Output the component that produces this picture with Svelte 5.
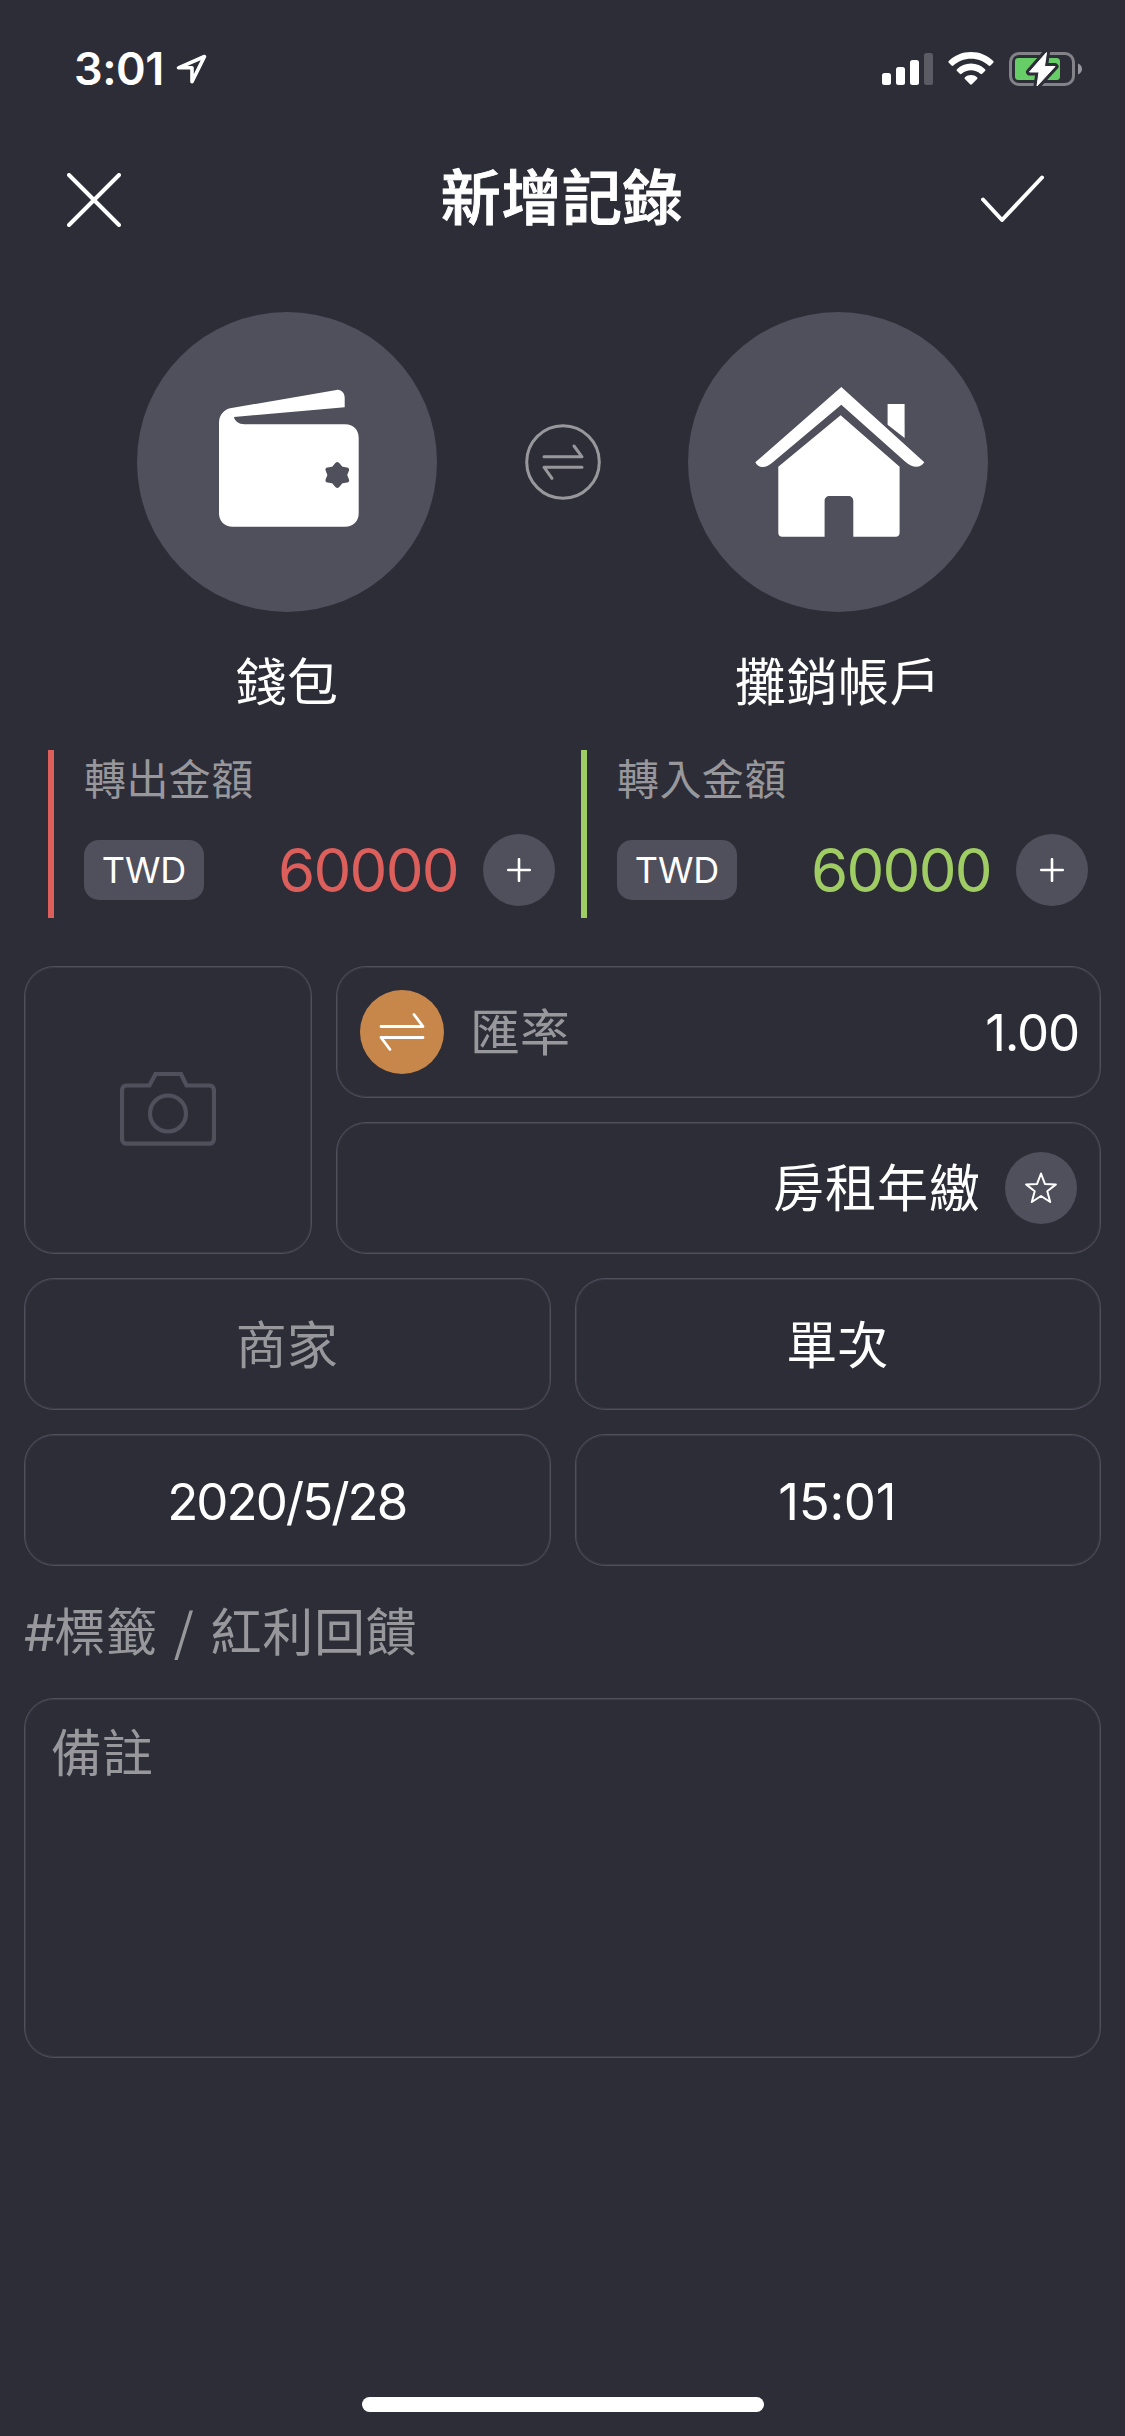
<script lang="ts">
	/**
	 * AddRecord
	 * Transfer form: accounts, amounts, exchange rate and record details
	 */
	type Side = {
		kind: 'out' | 'in';
		label: string;
		currency: string;
		amount: string;
	};

	const sides: Side[] = [
		{ kind: 'out', label: '轉出金額', currency: 'TWD', amount: '60000' },
		{ kind: 'in', label: '轉入金額', currency: 'TWD', amount: '60000' }
	];

	const details = [
		{ text: '商家', type: 'muted' },
		{ text: '單次', type: 'repeat' },
		{ text: '2020/5/28', type: 'date' },
		{ text: '15:01', type: 'hour' }
	];
</script>

<div class="screen">
	<div class="status-bar">
		<div class="clock">
			<span class="time">3:01</span>
			<svg class="location" viewBox="0 0 32 32">
				<path d="M28.5 3.5 2.5 14.8H16v14z" />
			</svg>
		</div>
		<div class="indicators">
			<svg width="51" height="38" viewBox="0 0 51 38" fill="#fff">
				<rect x="0" y="23" width="9" height="12" rx="2.5" />
				<rect x="14" y="17" width="9" height="18" rx="2.5" />
				<rect x="28" y="10" width="9" height="25" rx="2.5" />
				<rect x="42" y="3" width="9" height="32" rx="2.5" opacity=".22" />
			</svg>
			<svg width="46" height="38" viewBox="0 0 46 38" fill="#fff">
				<path d="M23 2C14.3 2 6.400 5.400.8 11c-.6.600-.6 1.200 0 1.800l2.700 2.700c.6.600 1.300.6 1.900 0C10 11.200 16.200 8.700 23 8.700s13 2.500 17.600 6.800c.6.600 1.300.6 1.900 0l2.700-2.700c.6-.6.6-1.200 0-1.800C39.600 5.400 31.700 2 23 2z" />
				<path d="M23 13.600c-5.500 0-10.400 2.100-14 5.600-.6.600-.6 1.200 0 1.800l2.800 2.800c.6.600 1.200.6 1.800 0 2.500-2.200 5.800-3.500 9.400-3.500s6.900 1.300 9.400 3.500c.6.600 1.200.6 1.800 0L37 21c.6-.6.6-1.200 0-1.800-3.600-3.500-8.500-5.600-14-5.600z" />
				<path d="M23 25c-2.300 0-4.400.8-6 2.200-.6.500-.6 1.100-.1 1.700l5.200 5.400c.6.600 1.200.6 1.800 0l5.200-5.400c.5-.6.5-1.200-.1-1.700-1.600-1.400-3.700-2.200-6-2.200z" />
			</svg>
			<svg class="battery" width="75" height="40" viewBox="0 0 75 40">
				<rect x="1.500" y="4.500" width="63" height="31" rx="8.500" fill="none" stroke="#838289" stroke-width="3" />
				<rect x="6" y="9" width="45" height="22" rx="3.500" fill="#67ce67" />
				<path d="M69 14.500c2.600 1 4 3 4 5.500s-1.400 4.500-4 5.500z" fill="#97969c" />
				<path class="bolt-gap" d="M37.500 3.500 20.500 23h9.500L28 37 46 17.500H35.500z" />
				<path d="M37.500 3.500 20.500 23h9.500L28 37 46 17.500H35.500z" fill="#fff" stroke="#fff" stroke-linejoin="round" />
			</svg>
		</div>
	</div>

	<header class="header">
		<button class="icon-btn" aria-label="關閉">
			<svg width="54" height="54" viewBox="0 0 54 54" class="line-icon">
				<path d="M2 2l50 50M52 2 2 52" />
			</svg>
		</button>
		<h1 class="title">新增記錄</h1>
		<button class="icon-btn" aria-label="完成">
			<svg width="64" height="54" viewBox="0 0 64 54" class="line-icon">
				<path d="M2 26.500 21 47 61 4.500" />
			</svg>
		</button>
	</header>

	<section class="accounts">
		<div class="account">
			<svg class="avatar" viewBox="0 0 300 300">
				<g transform="translate(82 77.700)">
					<path
						fill="#fff"
						d="M117.500.2c5-.6 8.200 3.300 8.200 8v9.300L15 27.300c.5 4 4.800 7.200 10.500 7.200H126c8.500 0 13.700 5.500 13.700 13.500v75.500c0 8-5.500 13.500-13.500 13.500h-112.500C5.500 137 0 131.500 0 123.500V33c0-8 5.500-13.600 12.500-14.600z"
					/>
					<path
						class="clasp"
						transform="translate(118.300 85.300)"
						d="M0-10.300 3.700-6l5.600.9L7.200 0l2.100 5.100L3.700 6 0 10.300-3.700 6l-5.600-.9L-7.200 0l-2.100-5.100L-3.700-6z"
					/>
				</g>
			</svg>
			<span class="account-name">錢包</span>
		</div>

		<button class="swap" aria-label="交換帳戶">
			<svg width="76" height="76" viewBox="0 0 76 76">
				<circle cx="38" cy="38" r="36.300" />
				<path d="M19 32.800H57L49 22M57 43.200H19L27 54.300" />
			</svg>
		</button>

		<div class="account">
			<svg class="avatar" viewBox="0 0 300 300">
				<g transform="translate(67.300 75)" fill="#fff">
					<path d="M86 0l83 75.300c-2 3-4.500 4.400-7.700 4.400-4 0-7.500-1.500-11-4.700L86 17.700 17.500 75.300C14 78.500 11 80 7.300 80 4 80 1.500 78.500 0 75.300z" />
					<path d="M132.300 17h17v34l-17-13.300z" />
					<path d="M85.300 28.300l59 51.400v66c0 2.500-1.500 4-4 4H98V114c0-3-2-5-5-5H74.300c-3 0-5 2-5 5v35.700H27c-2.500 0-4-1.500-4-4v-66z" />
				</g>
			</svg>
			<span class="account-name">攤銷帳戶</span>
		</div>
	</section>

	<section class="amounts">
		{#each sides as side}
			<div class="amount-box {side.kind}">
				<span class="amount-label">{side.label}</span>
				<div class="amount-row">
					<span class="currency">{side.currency}</span>
					<span class="amount">{side.amount}</span>
					<button class="round-btn" aria-label="新增">
						<svg width="24" height="24" viewBox="0 0 24 24">
							<path d="M12 1.200v21.600M1.200 12h21.600" />
						</svg>
					</button>
				</div>
			</div>
		{/each}
	</section>

	<section class="top-fields">
		<button class="card photo" aria-label="相片">
			<svg width="96" height="74" viewBox="0 0 96 74">
				<path d="M7 13.500H29.500L35.500 2H61L66.500 13.500H89Q94 13.500 94 19V66Q94 71.700 89 71.700H7Q2 71.700 2 66V19Q2 13.500 7 13.500z" />
				<circle cx="48" cy="41.500" r="18" />
			</svg>
		</button>
		<div class="stack">
			<div class="card rate">
				<span class="rate-icon">
					<svg width="84" height="84" viewBox="0 0 84 84">
						<path d="M21 36.500H63L54 24.500M63 47.500H21L30 59.500" />
					</svg>
				</span>
				<span class="rate-label muted">匯率</span>
				<span class="rate-value">1.00</span>
			</div>
			<div class="card name">
				<span class="name-value">房租年繳</span>
				<button class="round-btn" aria-label="收藏">
					<svg width="34" height="34" viewBox="0 0 34 34">
						<path d="M17 2.500l3.900 10.400 11 .5-8.600 6.900 2.900 10.700L17 25l-9.200 6 2.900-10.700-8.600-6.900 11-.5z" />
					</svg>
				</button>
			</div>
		</div>
	</section>

	<section class="details">
		{#each details as item}
			<button class="card detail {item.type}">{item.text}</button>
		{/each}
	</section>

	<div class="tags muted"><span class="hash">#</span>標籤 <span class="slash">/</span> 紅利回饋</div>
	<div class="card notes muted">備註</div>

	<div class="home-indicator"></div>
</div>

<style>
	:global(body) {
		background: #2d2d38;
	}

	.screen {
		display: flex;
		flex-direction: column;
		box-sizing: border-box;
		width: 1125px;
		height: 2436px;
		background: #2d2d38;
		color: #fff;
		font-family: Inter, 'Noto Sans CJK TC', sans-serif;
		font-size: 51px;
		line-height: 60px;
	}

	button {
		margin: 0;
		padding: 0;
		border: 0;
		background: none;
		color: inherit;
		font: inherit;
	}

	svg {
		display: block;
	}

	.muted {
		color: #98989c;
	}

	/* Status bar */
	.status-bar {
		display: flex;
		justify-content: space-between;
		height: 132px;
		padding: 0 41px 0 74px;
		box-sizing: border-box;
	}

	.clock {
		display: flex;
		align-items: center;
		height: 138px;
	}

	.time {
		font-size: 45px;
		font-weight: 600;
		letter-spacing: -0.5px;
	}

	.location {
		width: 32px;
		height: 32px;
		margin-left: 12px;
		fill: none;
		stroke: #fff;
		stroke-width: 3.6;
		stroke-linejoin: round;
	}

	.indicators {
		display: flex;
		align-items: center;
		gap: 15px;
		height: 138px;
	}

	.battery .bolt-gap {
		fill: #2d2d38;
		stroke: #2d2d38;
		stroke-width: 7;
		stroke-linejoin: round;
	}

	/* Header */
	.header {
		display: flex;
		align-items: center;
		justify-content: space-between;
		height: 135px;
		padding: 0 80px 0 67px;
	}

	.icon-btn {
		width: 64px;
	}

	.title {
		margin: 0;
		padding: 0 0 3px 12px;
		font-size: 60px;
		font-weight: 500;
		line-height: 72px;
		letter-spacing: 0.6px;
		-webkit-text-stroke: 1px #fff;
	}

	.line-icon {
		fill: none;
		stroke: #fff;
		stroke-width: 4;
		stroke-linecap: round;
		stroke-linejoin: round;
	}

	/* Accounts */
	.accounts {
		display: flex;
		justify-content: space-between;
		margin-top: 45px;
		padding: 0 137px;
	}

	.account {
		display: flex;
		flex-direction: column;
		align-items: center;
	}

	.avatar {
		width: 300px;
		height: 300px;
		border-radius: 50%;
		background: #504f5c;
	}

	.clasp {
		fill: #504f5c;
		stroke: #504f5c;
		stroke-width: 5;
		stroke-linejoin: round;
	}

	.account-name {
		margin-top: 41px;
		letter-spacing: 0.6px;
	}

	.swap {
		height: 300px;
	}

	.swap path,
	.swap circle {
		fill: none;
		stroke: #98989c;
		stroke-width: 3;
		stroke-linecap: round;
		stroke-linejoin: round;
	}

	/* Amounts */
	.amounts {
		display: flex;
		gap: 26px;
		margin-top: 37px;
		padding: 0 37px 0 48px;
	}

	.amount-box {
		flex: 0 0 507px;
		box-sizing: border-box;
		height: 168px;
		padding-left: 30px;
		border-left: 6px solid;
	}

	.out {
		border-color: #dc5f5c;
	}

	.in {
		border-color: #9fcd63;
	}

	.amount-label {
		display: block;
		color: #98989c;
		font-size: 42px;
		letter-spacing: 0.4px;
	}

	.amount-row {
		display: flex;
		align-items: center;
		margin-top: 24px;
	}

	.currency {
		width: 120px;
		border-radius: 15px;
		background: #504f5c;
		font-size: 36px;
		text-align: center;
	}

	.amount {
		flex: 1;
		margin-right: 25px;
		font-size: 60px;
		letter-spacing: -1.7px;
		text-align: right;
	}

	.out .amount {
		color: #dc5f5c;
	}

	.in .amount {
		color: #9fcd63;
	}

	.round-btn {
		display: flex;
		align-items: center;
		justify-content: center;
		width: 72px;
		height: 72px;
		border-radius: 50%;
		background: #504f5c;
	}

	.round-btn path {
		fill: none;
		stroke: #fff;
		stroke-width: 2.6;
		stroke-linecap: round;
		stroke-linejoin: round;
	}

	.name .round-btn path {
		stroke-width: 2;
	}

	/* Form fields */
	.card {
		box-sizing: border-box;
		border: 1px solid #504f5c;
		border-radius: 30px;
		box-shadow: inset 0 0 0 1px #3c3b47;
	}

	.top-fields {
		display: flex;
		gap: 24px;
		margin-top: 48px;
		padding: 0 24px;
	}

	.photo {
		display: flex;
		align-items: center;
		justify-content: center;
		width: 288px;
		height: 288px;
		padding-bottom: 2px;
	}

	.photo svg {
		fill: none;
		stroke: #504f5c;
		stroke-width: 4.2;
	}

	.stack {
		display: flex;
		flex: 1;
		flex-direction: column;
		gap: 24px;
	}

	.rate,
	.name {
		display: flex;
		align-items: center;
		height: 132px;
		padding: 0 23px;
	}

	.rate-icon {
		margin-right: 26px;
		border-radius: 50%;
		background: #c8874a;
	}

	.rate-icon path {
		fill: none;
		stroke: #fff;
		stroke-width: 2.8;
		stroke-linecap: round;
		stroke-linejoin: round;
	}

	.rate-label {
		padding-top: 2px;
		font-size: 50px;
	}

	.rate-value {
		margin: 2px -2px 0 auto;
		letter-spacing: -1.2px;
	}

	.name {
		justify-content: flex-end;
	}

	.name-value {
		margin-right: 24px;
		padding-top: 2px;
		letter-spacing: 1px;
	}

	.details {
		display: grid;
		grid-template-columns: 1fr 1fr;
		gap: 24px;
		margin-top: 24px;
		padding: 0 24px;
	}

	.detail {
		height: 132px;
		padding: 3px 1px 0 0;
	}

	.date {
		letter-spacing: -2px;
	}

	.hour {
		letter-spacing: -0.3px;
	}

	.tags {
		margin: 37px 24px 0;
		letter-spacing: 0.7px;
	}

	.hash {
		letter-spacing: -2px;
	}

	.slash {
		margin: 0 1px;
		font-family: 'Noto Sans CJK TC', sans-serif;
		line-height: 0;
	}

	.notes {
		height: 360px;
		margin: 35px 24px 0;
		padding: 25px 26px;
	}

	.home-indicator {
		width: 402px;
		height: 15px;
		margin: auto auto 24px;
		border-radius: 8px;
		background: #fff;
	}
</style>
